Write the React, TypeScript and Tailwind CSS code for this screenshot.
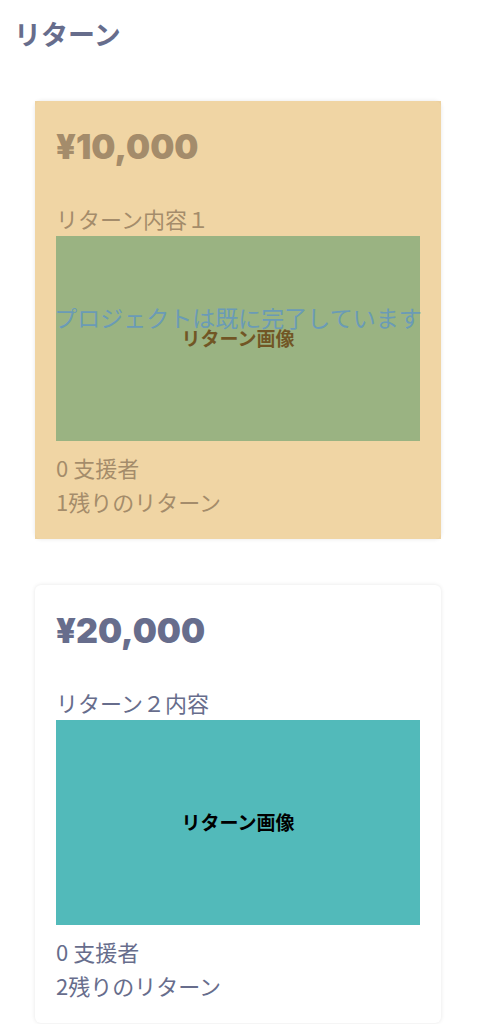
import React from 'react';

interface ReturnItem {
  price: string;
  content: string;
  supporters: number;
  remaining: number;
  completed?: boolean;
}

const returns: ReturnItem[] = [
  { price: '¥10,000', content: 'リターン内容１', supporters: 0, remaining: 1, completed: true },
  { price: '¥20,000', content: 'リターン２内容', supporters: 0, remaining: 2 },
];

const ReturnCard: React.FC<{ item: ReturnItem }> = ({ item }) => {
  return (
    <div className="relative w-[406px] bg-white rounded-md shadow-[0_0_4px_rgba(0,0,0,0.1)] px-[21px] pt-[25px] pb-[21px]">
      <div className="h-[40px] flex items-center text-[34px] font-black text-[#676d8c] font-['Inter',sans-serif]">
        {item.price}
      </div>
      <p className="mt-[37px] h-[30px] leading-[30px] text-[22px] text-[#676d8c]">{item.content}</p>
      <div className="mt-[3px] h-[205px] bg-[#52baba] flex items-center justify-center">
        <span className="text-[19px] font-bold text-black">リターン画像</span>
      </div>
      <p className="mt-[9px] h-[34px] leading-[34px] text-[22px] text-[#676d8c]">
        {item.supporters} 支援者
      </p>
      <p className="h-[34px] leading-[34px] text-[22px] text-[#676d8c]">{item.remaining}残りのリターン</p>

      {/* completed overlay */}
      {item.completed && (
        <div className="absolute inset-0 bg-[rgba(225,171,73,0.5)] flex items-center justify-center pb-[5px]">
          <span className="text-[23px] text-[#6a9bb6] whitespace-nowrap">プロジェクトは既に完了しています</span>
        </div>
      )}
    </div>
  );
};

const App: React.FC = () => {
  return (
    <div className="min-h-screen bg-white font-['Noto_Sans_CJK_JP','Noto_Sans',sans-serif] pt-[16px]">
      <h2 className="pl-[14px] h-[36px] leading-[36px] text-[27px] font-bold text-[#676d8c]">リターン</h2>
      <div className="mt-[49px] pl-[35px] flex flex-col gap-[46px]">
        {returns.map((item, index) => (
          <ReturnCard key={index} item={item} />
        ))}
      </div>
    </div>
  );
};

export default App;
